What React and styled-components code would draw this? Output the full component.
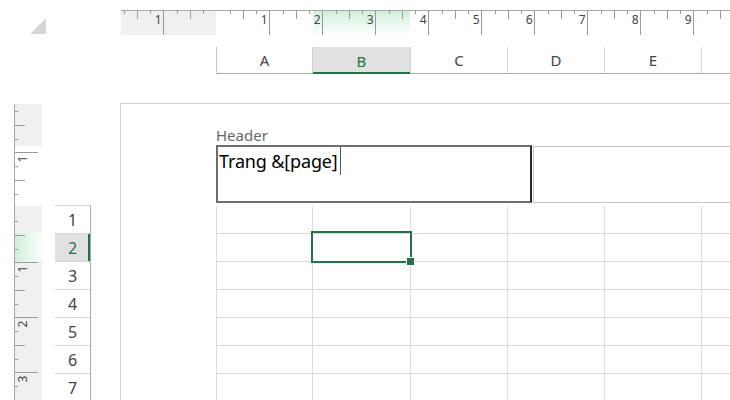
import React from "react";
import styled, { createGlobalStyle } from "styled-components";

const GlobalStyle = createGlobalStyle`
  html, body {
    margin: 0;
    padding: 0;
    background: #ffffff;
  }
  * {
    box-sizing: border-box;
  }
`;

const GREEN = "#217346";
const COLS = ["A", "B", "C", "D", "E", ""];
const COL_W = [96, 98, 97, 97, 97, 97];
const ROWS = [1, 2, 3, 4, 5, 6, 7];

const Sheet = styled.div`
  width: 730px;
  height: 400px;
  overflow: hidden;
  display: flex;
  flex-direction: column;
  background: #ffffff;
  font-family: "Noto Sans", "Open Sans", sans-serif;
`;

const TopArea = styled.div`
  height: 103px;
  display: flex;
  flex-shrink: 0;
`;

const Corner = styled.div`
  width: 121px;
  flex-shrink: 0;
  padding: 18px 0 0 30px;
`;

const TopRight = styled.div`
  flex: 1;
  display: flex;
  flex-direction: column;
`;

const RulerStrip = styled.div`
  margin-top: 10px;
  height: 25px;
`;

const ColumnHeaders = styled.div`
  margin-top: 12px;
  margin-left: 95px;
  height: 27px;
  display: flex;
  border-bottom: 1px solid #ababab;
  border-left: 1px solid #c6c6c6;
`;

const ColumnHead = styled.div`
  flex-shrink: 0;
  display: flex;
  align-items: center;
  justify-content: center;
  font-size: 15px;
  color: ${(p) => (p.$active ? GREEN : "#444444")};
  background: ${(p) => (p.$active ? "#e1e1e1" : "#ffffff")};
  border-right: 1px solid #d4d4d4;
  box-shadow: ${(p) => (p.$active ? `inset 0 -2px 0 ${GREEN}` : "none")};
  margin-bottom: ${(p) => (p.$active ? "-1px" : "0")};
`;

const BottomArea = styled.div`
  flex: 1;
  display: flex;
  min-height: 0;
`;

const SideRuler = styled.div`
  margin-left: 14px;
  width: 28px;
  flex-shrink: 0;
`;

const RowHeaders = styled.div`
  margin-left: 13px;
  width: 36px;
  flex-shrink: 0;
  padding-top: 102px;
`;

const RowList = styled.div`
  border-top: 1px solid #d4d4d4;
  border-right: 1px solid #ababab;
`;

const RowHead = styled.div`
  height: 28px;
  display: flex;
  align-items: center;
  justify-content: center;
  font-size: 16px;
  color: ${(p) => (p.$active ? GREEN : "#444444")};
  background: ${(p) => (p.$active ? "#e1e1e1" : "#ffffff")};
  border-bottom: 1px solid #d4d4d4;
  box-shadow: ${(p) => (p.$active ? `inset -2px 0 0 ${GREEN}` : "none")};
`;

const Page = styled.div`
  margin-left: 29px;
  flex: 1;
  border-left: 1px solid #d0d0d0;
  border-top: 1px solid #d0d0d0;
  padding: 21px 0 0 95px;
`;

const HeaderLabel = styled.div`
  font-size: 15px;
  line-height: 20px;
  height: 20px;
  color: #666666;
`;

const HeaderRow = styled.div`
  display: flex;
  height: 58px;
`;

const HeaderSection = styled.div`
  width: 316px;
  flex-shrink: 0;
  border: 2px solid #6e6e6e;
  border-right-color: #2a2a2a;
  padding: 0 0 0 1px;
  font-size: 18px;
  letter-spacing: -0.15px;
  line-height: 28px;
  color: #000000;
  white-space: nowrap;
`;

const Caret = styled.span`
  display: inline-block;
  width: 1px;
  height: 28px;
  margin-left: 2px;
  vertical-align: top;
  background: #555555;
`;

const CenterSection = styled.div`
  flex: 1;
  margin: 1px 0 0 1px;
  height: 57px;
  border: 1px solid #c8c8c8;
  border-right: none;
`;

const Grid = styled.div`
  margin-top: 3px;
  display: grid;
  grid-template-columns: ${COL_W.map((w) => w + "px").join(" ")};
  grid-auto-rows: 28px;
  border-left: 1px solid #dadada;
`;

const Cell = styled.div`
  position: relative;
  border-right: 1px solid #dadada;
  border-bottom: 1px solid #dadada;

  ${(p) =>
    p.$selected &&
    `
    &::after {
      content: "";
      position: absolute;
      top: -3px;
      left: -2px;
      right: -2px;
      bottom: -2px;
      border: 2px solid ${GREEN};
      z-index: 1;
    }
    &::before {
      content: "";
      position: absolute;
      right: -5px;
      bottom: -5px;
      width: 7px;
      height: 7px;
      background: ${GREEN};
      border: 1px solid #ffffff;
      z-index: 2;
    }
  `}
`;

const CornerMark = () => (
  <svg width="17" height="17" viewBox="0 0 17 17">
    <polygon points="0,16 16,0 16,16" fill="#d6d6d6" />
  </svg>
);

const HorizontalRuler = () => {
  const width = 609;
  const origin = 95.5;
  const unit = 53;
  const lines = [];
  const labels = [];
  for (let k = -2; k <= 10; k++) {
    const base = origin + k * unit;
    if (k !== 0 && base > 0 && base < width) {
      lines.push(<line key={"m" + k} x1={base} y1={0} x2={base} y2={25} stroke="#9a9a9a" />);
      labels.push(
        <text key={"t" + k} x={base - 2} y={14} textAnchor="end" fontSize="12" fill="#444">
          {Math.abs(k)}
        </text>
      );
    }
    for (let q = 1; q <= 3; q++) {
      const x = Math.round(base + (q * unit) / 4) + 0.5;
      if (x < 0 || x > width) continue;
      lines.push(
        <line key={k + "q" + q} x1={x} y1={0} x2={x} y2={q === 2 ? 9 : 4} stroke="#9a9a9a" />
      );
    }
  }
  return (
    <svg width={width} height="25" style={{ display: "block" }}>
      <defs>
        <linearGradient id="hsel" x1="0" y1="0" x2="0" y2="1">
          <stop offset="0" stopColor="#d2eeda" />
          <stop offset="1" stopColor="#ffffff" />
        </linearGradient>
      </defs>
      <rect x="0" y="1" width="95" height="24" fill="#f0f0f0" />
      <rect x="192" y="1" width="97" height="24" fill="url(#hsel)" />
      <line x1="0" y1="0.5" x2={width} y2="0.5" stroke="#a8a8a8" />
      {lines}
      {labels}
    </svg>
  );
};

const VerticalRuler = () => {
  const height = 297;
  const origin = 104.5;
  const unit = 55;
  const lines = [];
  const labels = [];
  for (let k = -2; k <= 4; k++) {
    const base = origin + k * unit;
    if (k !== 0 && base > 0 && base < height) {
      lines.push(<line key={"m" + k} x1={1} y1={base} x2={24} y2={base} stroke="#9a9a9a" />);
      labels.push(
        <text
          key={"t" + k}
          transform={`translate(13 ${base + 10}) rotate(-90)`}
          fontSize="12"
          fill="#444"
        >
          {Math.abs(k)}
        </text>
      );
    }
    for (let q = 1; q <= 3; q++) {
      const y = Math.round(base + (q * unit) / 4) + 0.5;
      if (y < 1 || y > height) continue;
      lines.push(
        <line key={k + "q" + q} x1={1} y1={y} x2={q === 2 ? 11 : 4} y2={y} stroke="#9a9a9a" />
      );
    }
  }
  return (
    <svg width="28" height={height} style={{ display: "block" }}>
      <defs>
        <linearGradient id="vsel" x1="0" y1="0" x2="1" y2="0">
          <stop offset="0" stopColor="#d2eeda" />
          <stop offset="1" stopColor="#fafdfb" />
        </linearGradient>
      </defs>
      <rect x="1" y="1" width="27" height="42" fill="#f0f0f0" />
      <rect x="1" y="103" width="27" height={height - 103} fill="#f0f0f0" />
      <rect x="1" y="130" width="27" height="28" fill="url(#vsel)" />
      <line x1="0.5" y1="1" x2="0.5" y2={height} stroke="#a8a8a8" />
      {lines}
      {labels}
    </svg>
  );
};

const App = () => {
  return (
    <Sheet>
      <GlobalStyle />
      <TopArea>
        <Corner>
          <CornerMark />
        </Corner>
        <TopRight>
          <RulerStrip>
            <HorizontalRuler />
          </RulerStrip>
          <ColumnHeaders>
            {COLS.map((c, i) => (
              <ColumnHead key={i} $active={c === "B"} style={{ width: COL_W[i] }}>
                {c}
              </ColumnHead>
            ))}
          </ColumnHeaders>
        </TopRight>
      </TopArea>

      <BottomArea>
        <SideRuler>
          <VerticalRuler />
        </SideRuler>
        <RowHeaders>
          <RowList>
            {ROWS.map((r) => (
              <RowHead key={r} $active={r === 2}>
                {r}
              </RowHead>
            ))}
          </RowList>
        </RowHeaders>
        <Page>
          <HeaderLabel>Header</HeaderLabel>
          <HeaderRow>
            <HeaderSection>
              Trang &amp;[page]
              <Caret />
            </HeaderSection>
            <CenterSection />
          </HeaderRow>
          <Grid>
            {ROWS.map((r) =>
              COLS.map((c, i) => <Cell key={r + "-" + i} $selected={r === 2 && c === "B"} />)
            )}
          </Grid>
        </Page>
      </BottomArea>
    </Sheet>
  );
};

export default App;
